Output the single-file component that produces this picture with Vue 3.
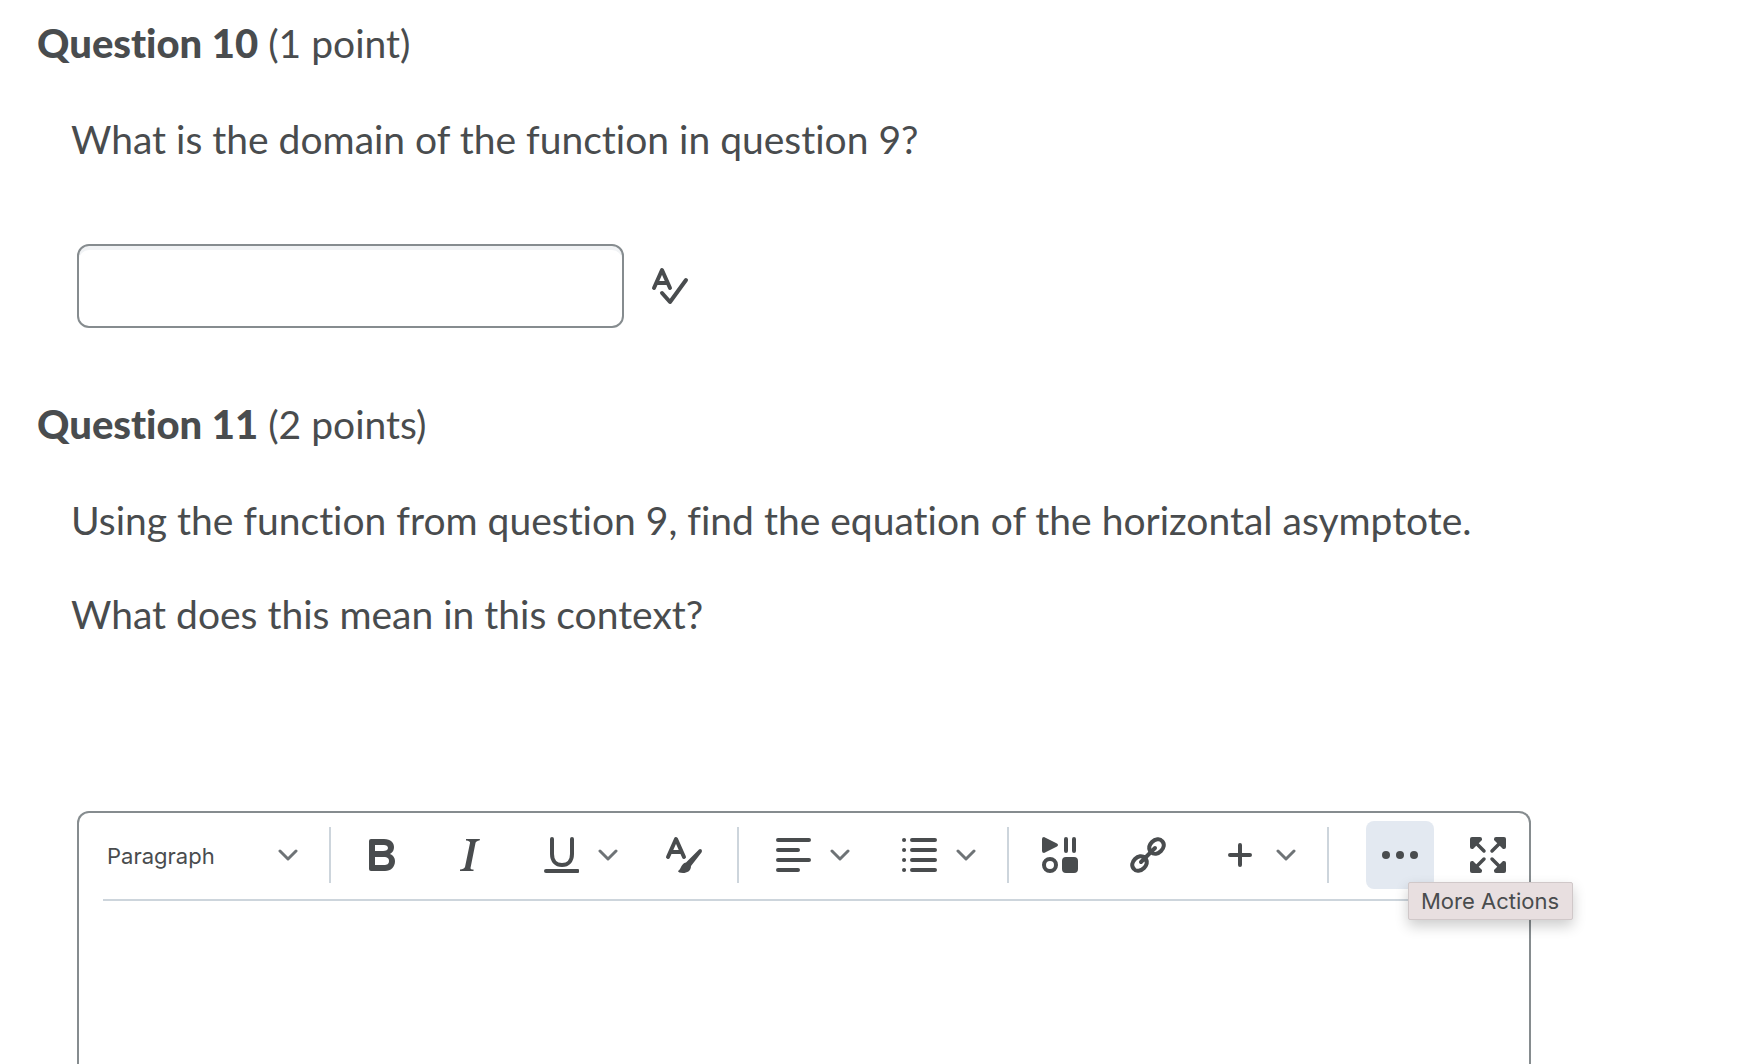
<template>
  <main class="quiz">
    <section class="question">
      <h2 class="title"><strong>Question 10</strong> (1 point)</h2>
      <p class="prompt"><label for="answer10">What is the domain of the function in question 9?</label></p>
      <div class="answer-row">
        <input id="answer10" v-model="answer" class="answer" type="text" />
        <button class="spell" type="button" aria-label="Check Spelling">
          <svg class="icon" viewBox="0 0 36 36">
            <path d="M2 20 L10 2 L18 20 M5 15 H15" class="line" />
            <path d="M10 25 L18 34 L34 12" class="line" />
          </svg>
        </button>
      </div>
    </section>

    <section class="question last">
      <h2 class="title"><strong>Question 11</strong> (2 points)</h2>
      <p class="prompt">Using the function from question 9, find the equation of the horizontal asymptote.</p>
      <p class="prompt second"><label for="answer11">What does this mean in this context?</label></p>

      <div class="editor">
        <div class="toolbar">
          <div class="format">
            <select v-model="format" class="format-select" aria-label="Format">
              <option v-for="item in formats" :key="item">{{ item }}</option>
            </select>
            <svg class="chevron" viewBox="0 0 20 12"><path d="M2 2 L10 10 L18 2" /></svg>
          </div>
          <template v-for="(group, index) in groups" :key="index">
            <span class="separator"></span>
            <div class="group">
              <button
                v-for="tool in group"
                :key="tool.name"
                type="button"
                :class="['tool', { menu: tool.menu }]"
                :aria-label="tool.name"
              >
                <svg class="icon" viewBox="0 0 36 36">
                  <path v-if="tool.fill" :d="tool.fill" class="fill" />
                  <path v-if="tool.line" :d="tool.line" class="line" />
                </svg>
                <svg v-if="tool.menu" class="chevron" viewBox="0 0 20 12"><path d="M2 2 L10 10 L18 2" /></svg>
              </button>
            </div>
          </template>
          <span class="separator"></span>
          <div class="group end">
            <div class="more">
              <button class="tool active" type="button" aria-describedby="more-tip" aria-label="More Actions">
                <svg class="icon" viewBox="0 0 36 36">
                  <circle cx="4" cy="18" r="4" class="fill" />
                  <circle cx="18" cy="18" r="4" class="fill" />
                  <circle cx="32" cy="18" r="4" class="fill" />
                </svg>
              </button>
              <span id="more-tip" class="tooltip" role="tooltip">More Actions</span>
            </div>
            <button class="tool" type="button" aria-label="Fullscreen">
              <svg class="icon" viewBox="0 0 36 36">
                <path :d="corner" class="fill" />
                <path :d="corner" class="fill" transform="rotate(90 18 18)" />
                <path :d="corner" class="fill" transform="rotate(180 18 18)" />
                <path :d="corner" class="fill" transform="rotate(270 18 18)" />
                <path d="M7 7 L14 14 M29 7 L22 14 M7 29 L14 22 M29 29 L22 22" class="line thin" />
              </svg>
            </button>
          </div>
        </div>
        <textarea id="answer11" v-model="essay" class="writing"></textarea>
      </div>
    </section>
  </main>
</template>

<script setup>
import { ref } from 'vue';

const answer = ref('');
const essay = ref('');
const format = ref('Paragraph');
const formats = ['Paragraph', 'Heading 1', 'Heading 2', 'Heading 3', 'Preformatted'];

const corner = 'M2 0 H10 Q12 0 12 2 L12 3 L3 12 H2 Q0 12 0 10 V2 Q0 0 2 0 Z';

const groups = [
  [
    {
      name: 'Bold',
      fill: 'M7 2 H20 C27 2 30 6 30 10 C30 13 29 15 26 17 C29 18 31 21 31 24 C31 30 27 34 21 34 H7 Q5 34 5 32 V4 Q5 2 7 2 Z M11 8 V14 H19 C22 14 24 13 24 11 C24 9 22 8 20 8 Z M11 20 V28 H20 C23 28 25 27 25 24 C25 21 23 20 20 20 Z'
    },
    {
      name: 'Italic',
      fill: 'M14 2 H28 L27.500 3.500 Q24 4 23.500 6 L18.500 31 Q18.500 32.500 21.500 32.500 V34 H8 V32.500 Q12 32 13 30 L18 6 Q18.500 4 14 3.500 Z'
    },
    {
      name: 'Underline',
      menu: true,
      fill: 'M2 32 H34 Q35 32 35 33 V35 Q35 36 34 36 H2 Q0 36 0 34 Q0 32 2 32 Z',
      line: 'M8 2 V17 C8 24 12 28 18 28 C24 28 28 24 28 17 V2'
    },
    {
      name: 'Format Painter',
      line: 'M2 20 L10 2 L18 20 M5 15 H15',
      fill: 'M33 12.5 Q34 11.500 35.500 12.500 Q36.500 14 35.500 15.500 L25 29 C25 34 21 36 17 36 C14 36 12 35 12 34 C15 33 15 26 20 25.500 Z'
    }
  ],
  [
    { name: 'Alignment', menu: true, line: 'M2 3 H33 M2 13 H22 M2 23 H33 M2 33 H22' },
    {
      name: 'Lists',
      menu: true,
      line: 'M2 3 H2.1 M2 13 H2.1 M2 23 H2.1 M2 33 H2.1 M10 3 H33 M10 13 H33 M10 23 H33 M10 33 H33'
    }
  ],
  [
    {
      name: 'Insert Stuff',
      fill: 'M0 2 Q0 0 2 0 L15 6.500 Q17 8 15 9.500 L2 16 Q0 16 0 14 Z M24 20 H32 Q36 20 36 24 V32 Q36 36 32 36 H24 Q20 36 20 32 V24 Q20 20 24 20 Z',
      line: 'M24 2 V14 M32 2 V14 M14 28 A6 6 0 1 1 2 28 A6 6 0 1 1 14 28 Z'
    },
    {
      name: 'Quicklink',
      line: 'M20 14 C18 10 20 7 22 5 C25 2 30 1 32 4 C35 7 34 11 31 14 C28 17 24 18 21 15 M16 22 C18 26 16 29 14 31 C11 34 6 35 4 32 C1 29 2 25 5 22 C8 19 12 18 15 21 M11 25 L25 11'
    },
    { name: 'Insert', menu: true, line: 'M8 18 H28 M18 8 V28' }
  ]
];
</script>

<style>
body {
  margin: 0;
  background: #fff;
}
</style>

<style scoped>
.quiz {
  box-sizing: border-box;
  min-height: 100vh;
  display: flex;
  flex-direction: column;
  padding: 18px 223px 0 37px;
  color: #494c4e;
  font-family: Lato, sans-serif;
  font-variant-ligatures: none;
}

.question.last {
  flex: 1;
  display: flex;
  flex-direction: column;
}

.title {
  margin: 0;
  font-size: 39px;
  line-height: 50px;
  font-weight: 400;
}

.title strong {
  font-size: 40px;
  font-weight: 900;
}

.prompt {
  margin: 44px 0 0 34px;
  font-size: 39px;
  line-height: 54px;
}

.prompt.second {
  margin-top: 40px;
}

.answer-row {
  display: flex;
  align-items: center;
  gap: 12px;
  margin: 78px 0 71px 40px;
}

.answer {
  box-sizing: border-box;
  width: 547px;
  height: 84px;
  padding: 0 24px;
  border: 2px solid #868c8f;
  border-radius: 12px;
  box-shadow: inset 0 4px 0 #f1f3f5;
  color: inherit;
  font: inherit;
  font-size: 39px;
  outline: none;
}

button {
  border: 0;
  background: none;
  color: inherit;
  cursor: pointer;
}

.spell {
  display: flex;
  padding: 16px;
}

.icon {
  flex: none;
  width: 36px;
  height: 36px;
  overflow: visible;
}

.fill {
  fill: #494c4e;
  fill-rule: evenodd;
}

.line {
  fill: none;
  stroke: #494c4e;
  stroke-width: 4;
  stroke-linecap: round;
  stroke-linejoin: round;
}

.line.thin {
  stroke-width: 3.5;
}

.chevron {
  flex: none;
  width: 20px;
  height: 12px;
}

.chevron path {
  fill: none;
  stroke: #6e7376;
  stroke-width: 3;
  stroke-linecap: round;
  stroke-linejoin: round;
}

.editor {
  flex: 1;
  display: flex;
  flex-direction: column;
  margin: 170px 0 0 40px;
  border: 2px solid #868c8f;
  border-bottom: 0;
  border-radius: 12px 12px 0 0;
}

.toolbar {
  display: flex;
  align-items: center;
  gap: 17px;
  padding: 8px 7px 10px 24px;
  font-family: Inter, sans-serif;
}

.format {
  display: grid;
  grid-template-columns: 1fr 20px;
  align-items: center;
  width: 209px;
}

.format-select {
  grid-area: 1 / 1 / 2 / 3;
  height: 68px;
  padding: 2px 4px 0;
  border: 0;
  background: none;
  appearance: none;
  color: inherit;
  font: inherit;
  font-size: 22px;
  outline: none;
}

.format .chevron {
  grid-area: 1 / 2;
  justify-self: end;
  margin-right: 14px;
  pointer-events: none;
}

.separator {
  width: 2px;
  height: 56px;
  background: #cdd5dc;
}

.group {
  display: flex;
  gap: 20px;
  padding-right: 2px;
}

.group.end {
  margin-left: auto;
  padding-right: 0;
}

.tool {
  display: flex;
  align-items: center;
  justify-content: center;
  width: 68px;
  height: 68px;
  padding: 0;
  border-radius: 8px;
}

.tool.menu {
  width: 106px;
  gap: 18px;
  padding: 0 12px 0 20px;
}

.tool.active {
  background: #e3e9f1;
}

.more {
  position: relative;
}

.tooltip {
  position: absolute;
  z-index: 1;
  top: 61px;
  left: 42px;
  padding: 1px 13px 0 12px;
  border: 1px solid #d0c8c9;
  border-radius: 2px;
  background: #e8dfe0;
  box-shadow: 0 6px 14px rgba(0, 0, 0, 0.2);
  font-size: 22px;
  line-height: 35px;
  white-space: nowrap;
}

.writing {
  flex: 1;
  margin: 0 24px;
  padding: 20px 0;
  border: 0;
  border-top: 2px solid #cdd5dc;
  background: none;
  color: inherit;
  font-family: inherit;
  font-size: 39px;
  resize: none;
  outline: none;
}
</style>
